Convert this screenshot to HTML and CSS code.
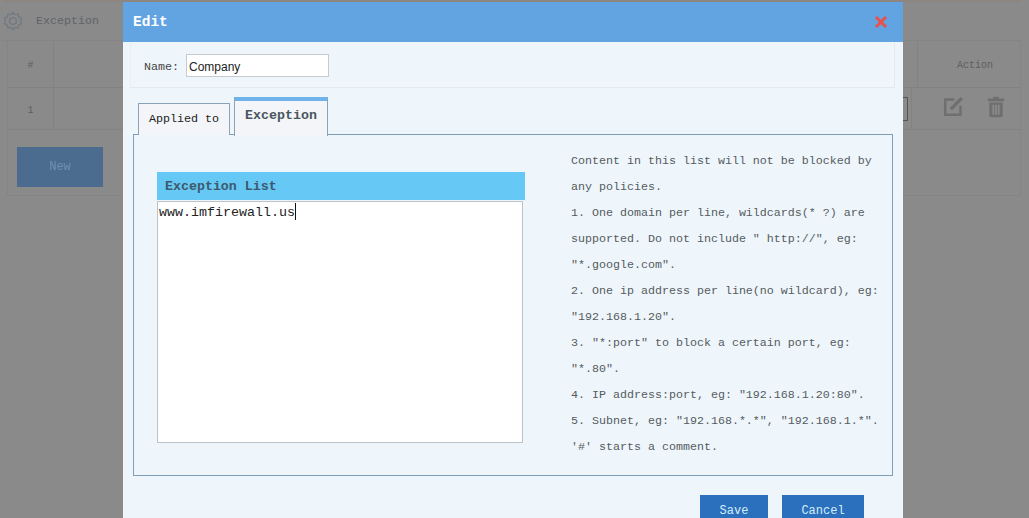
FILE: index.html
```html
<!DOCTYPE html>
<html lang="en">
<head>
    <meta charset="UTF-8">
    <meta name="viewport" content="width=device-width, initial-scale=1.0">
    <title>Exception</title>
    <link rel="stylesheet" href="styles.css">
</head>
<body>

<!-- page behind the dialog -->
<div class="page">
    <div class="topbar">
        <svg class="gear" width="20" height="20" viewBox="0 0 20 20" fill="none" stroke="#727a80" stroke-width="1.4">
            <path d="M10 1.5 L12 3.6 L15 3 L15.8 6 L18.5 7.4 L17.4 10 L18.5 12.6 L15.8 14 L15 17 L12 16.4 L10 18.5 L8 16.4 L5 17 L4.2 14 L1.5 12.6 L2.6 10 L1.5 7.4 L4.2 6 L5 3 L8 3.6 Z"/>
            <circle cx="10" cy="10" r="3.4"/>
        </svg>
        <span class="topbar-title">Exception</span>
    </div>
    <div class="table">
        <div class="table-row table-head">
            <div class="cell cell-num">#</div>
            <div class="cell cell-main"></div>
            <div class="cell cell-action">Action</div>
        </div>
        <div class="table-row table-body">
            <div class="cell cell-num">1</div>
            <div class="cell cell-main"><span class="cell-box"></span></div>
            <div class="cell cell-action cell-icons">
                <svg width="21" height="21" viewBox="0 0 24 24" fill="none" stroke="#6f6f6f" stroke-width="2.8">
                    <path d="M13 4 H2.5 V21.5 H20 V11"/>
                    <path d="M9 15 L21.5 2.5" stroke-width="3.6"/>
                </svg>
                <svg width="18" height="22" viewBox="0 0 20 24" fill="#6f6f6f">
                    <path d="M7 0.5 H13 V2.5 H19 V5.5 H1 V2.5 H7 Z"/>
                    <path d="M2.5 7 H17.5 V21 Q17.5 23.5 15 23.5 H5 Q2.5 23.5 2.5 21 Z M6 9.5 V20.5 H8 V9.5 Z M9 9.5 V20.5 H11 V9.5 Z M12 9.5 V20.5 H14 V9.5 Z" fill-rule="evenodd"/>
                </svg>
            </div>
        </div>
        <div class="table-foot">
            <button class="new-button">New</button>
        </div>
    </div>
</div>

<!-- dialog -->
<div class="modal">
    <div class="modal-header">
        <span class="modal-title">Edit</span>
        <svg class="modal-close" width="14" height="14" viewBox="0 0 14 14" stroke="#e8524a" stroke-width="3">
            <path d="M2 2 L12 12 M12 2 L2 12"/>
        </svg>
    </div>
    <div class="modal-body">
        <div class="name-row">
            <label class="name-label">Name:</label>
            <input class="name-input" type="text" value="Company">
        </div>
        <div class="tabs">
            <div class="tab">Applied to</div>
            <div class="tab tab-active">Exception</div>
        </div>
        <div class="tab-panel">
            <div class="list-column">
                <div class="list-title">Exception List</div>
                <div class="list-box">www.imfirewall.us<span class="caret"></span></div>
            </div>
            <div class="help">
                <p>Content in this list will not be blocked by any policies.</p>
                <p>1. One domain per line, wildcards(* ?) are supported. Do not include ″ http://″, eg: ″*.google.com″.</p>
                <p>2. One ip address per line(no wildcard), eg: ″192.168.1.20″.</p>
                <p>3. ″*:port″ to block a certain port, eg: ″*.80″.</p>
                <p>4. IP address:port, eg: ″192.168.1.20:80″.</p>
                <p>5. Subnet, eg: ″192.168.*.*″, ″192.168.1.*″.</p>
                <p>'#' starts a comment.</p>
            </div>
        </div>
        <div class="modal-buttons">
            <button class="btn btn-save">Save</button>
            <button class="btn btn-cancel">Cancel</button>
        </div>
    </div>
</div>

</body>
</html>
```

FILE: styles.css
```css
body {
    margin: 0;
    padding: 0;
    height: 518px;
    overflow: hidden;
    background-color: #8a8a8a;
    font-family: "Liberation Mono", monospace;
    color: #333;
}

/* page behind the dialog */
.page {
    padding: 0 8px 0 7px;
}

.topbar {
    height: 41px;
    display: flex;
    align-items: center;
    gap: 13px;
    margin-left: -4px;
    border-top: 2px solid #8d8580;
    box-sizing: border-box;
    border-bottom: 1px solid #848484;
}

.topbar-title {
    font-size: 11.7px;
    color: #5f6468;
}

.table {
    border: 1px solid #858585;
    border-top: none;
    font-size: 10px;
    color: #5e5e5e;
}

.table-row {
    display: flex;
    border-bottom: 1px solid #828282;
}

.table-head {
    height: 46px;
}

.table-head .cell {
    padding-top: 3px;
    box-sizing: border-box;
}

.table-body {
    height: 41px;
}

.cell {
    display: flex;
    align-items: center;
    justify-content: center;
}

.table-body .cell-num {
    padding-top: 3px;
    box-sizing: border-box;
}

.cell-num {
    width: 46px;
    border-right: 1px solid #828282;
}

.cell-main {
    flex: 1;
    justify-content: flex-end;
    border-right: 1px solid #828282;
}

.cell-box {
    width: 6px;
    height: 22px;
    margin-right: 3px;
    border: 1px solid #555;
    border-left: none;
}

.cell-action {
    width: 102px;
    padding-left: 12px;
    box-sizing: border-box;
}

.table-body .cell-action {
    width: 108px;
    padding-left: 15px;
}

.cell-icons {
    gap: 23px;
    padding-bottom: 4px;
}

.table-foot {
    height: 65px;
    box-sizing: border-box;
    display: flex;
    align-items: center;
    padding: 8px 0 0 9px;
}

.new-button {
    width: 86px;
    height: 40px;
    border: none;
    background-color: #4b6b8f;
    color: #6f8fb0;
    font-family: "Liberation Mono", monospace;
    font-size: 12px;
}

/* dialog */
.modal {
    position: absolute;
    top: 2px;
    left: 123px;
    width: 780px;
    height: 516px;
    background-color: #eff6fb;
}

.modal-header {
    height: 40px;
    background-color: #62a3e2;
    display: flex;
    align-items: center;
    justify-content: space-between;
    padding: 0 15px 0 10px;
}

.modal-title {
    font-size: 14.5px;
    font-weight: bold;
    color: #fff;
}

.modal-body {
    padding: 1px 10px 0 7px;
}

.name-row {
    height: 45px;
    display: flex;
    align-items: center;
    margin-right: -2px;
    padding-left: 13px;
    box-sizing: border-box;
    border-bottom: 1px solid #e3e9ee;
    border-left: 1px solid #e8eef3;
    border-right: 1px solid #e3e9ee;
}

.name-label {
    font-size: 11.7px;
    color: #444;
    width: 42px;
    padding-top: 4px;
}

.name-input {
    width: 143px;
    height: 23px;
    padding: 3px 2px 0;
    box-sizing: border-box;
    border: 1px solid #c4ccd2;
    background-color: #fff;
    font-family: "Liberation Sans", sans-serif;
    font-size: 12px;
    color: #222;
    outline: none;
}

.tabs {
    display: flex;
    align-items: flex-end;
    gap: 4px;
    padding-left: 8px;
    margin-top: 9px;
    height: 38px;
    position: relative;
    z-index: 1;
    margin-bottom: -1px;
}

.tab {
    height: 32px;
    width: 92px;
    box-sizing: border-box;
    border: 1px solid #8aa3b8;
    border-bottom: none;
    background-color: #f3f5f8;
    font-size: 11.7px;
    color: #222;
    display: flex;
    align-items: center;
    justify-content: center;
    padding-bottom: 2px;
}

.tab-active {
    width: 94px;
    height: 39px;
    border-top: 4px solid #6fb3ea;
    font-size: 13.3px;
    font-weight: bold;
    color: #4a5560;
    padding: 0 0 6px;
    margin-bottom: -1px;
    background-color: #f3f5f8;
}

.tab-panel {
    height: 342px;
    box-sizing: border-box;
    width: 760px;
    margin-left: 3px;
    border: 1px solid #7f9fb8;
    display: flex;
    padding: 37px 0 0 23px;
}

.list-column {
    width: 368px;
}

.list-title {
    height: 28px;
    background-color: #66c8f5;
    font-size: 13.3px;
    font-weight: bold;
    color: #3c5a6c;
    line-height: 30px;
    padding-left: 8px;
    margin-bottom: 1px;
}

.list-box {
    width: 366px;
    height: 242px;
    box-sizing: border-box;
    border: 1px solid #bcc2c8;
    background-color: #fff;
    font-size: 13.33px;
    line-height: 22px;
    color: #222;
    padding-left: 1px;
}

.caret {
    display: inline-block;
    width: 1px;
    height: 17px;
    background-color: #111;
    vertical-align: -4px;
}

.help {
    width: 312px;
    margin: -24px 0 0 46px;
    font-size: 11.67px;
    line-height: 26px;
    color: #555b61;
}

.help p {
    margin: 0;
}

.modal-buttons {
    display: flex;
    gap: 14px;
    padding: 19px 0 0 570px;
}

.btn {
    height: 30px;
    border: none;
    background-color: #2a70bd;
    color: #d5ecfa;
    font-family: "Liberation Mono", monospace;
    font-size: 12px;
    padding: 2px 0 0;
}

.btn-save {
    width: 68px;
}

.btn-cancel {
    width: 82px;
}
```
